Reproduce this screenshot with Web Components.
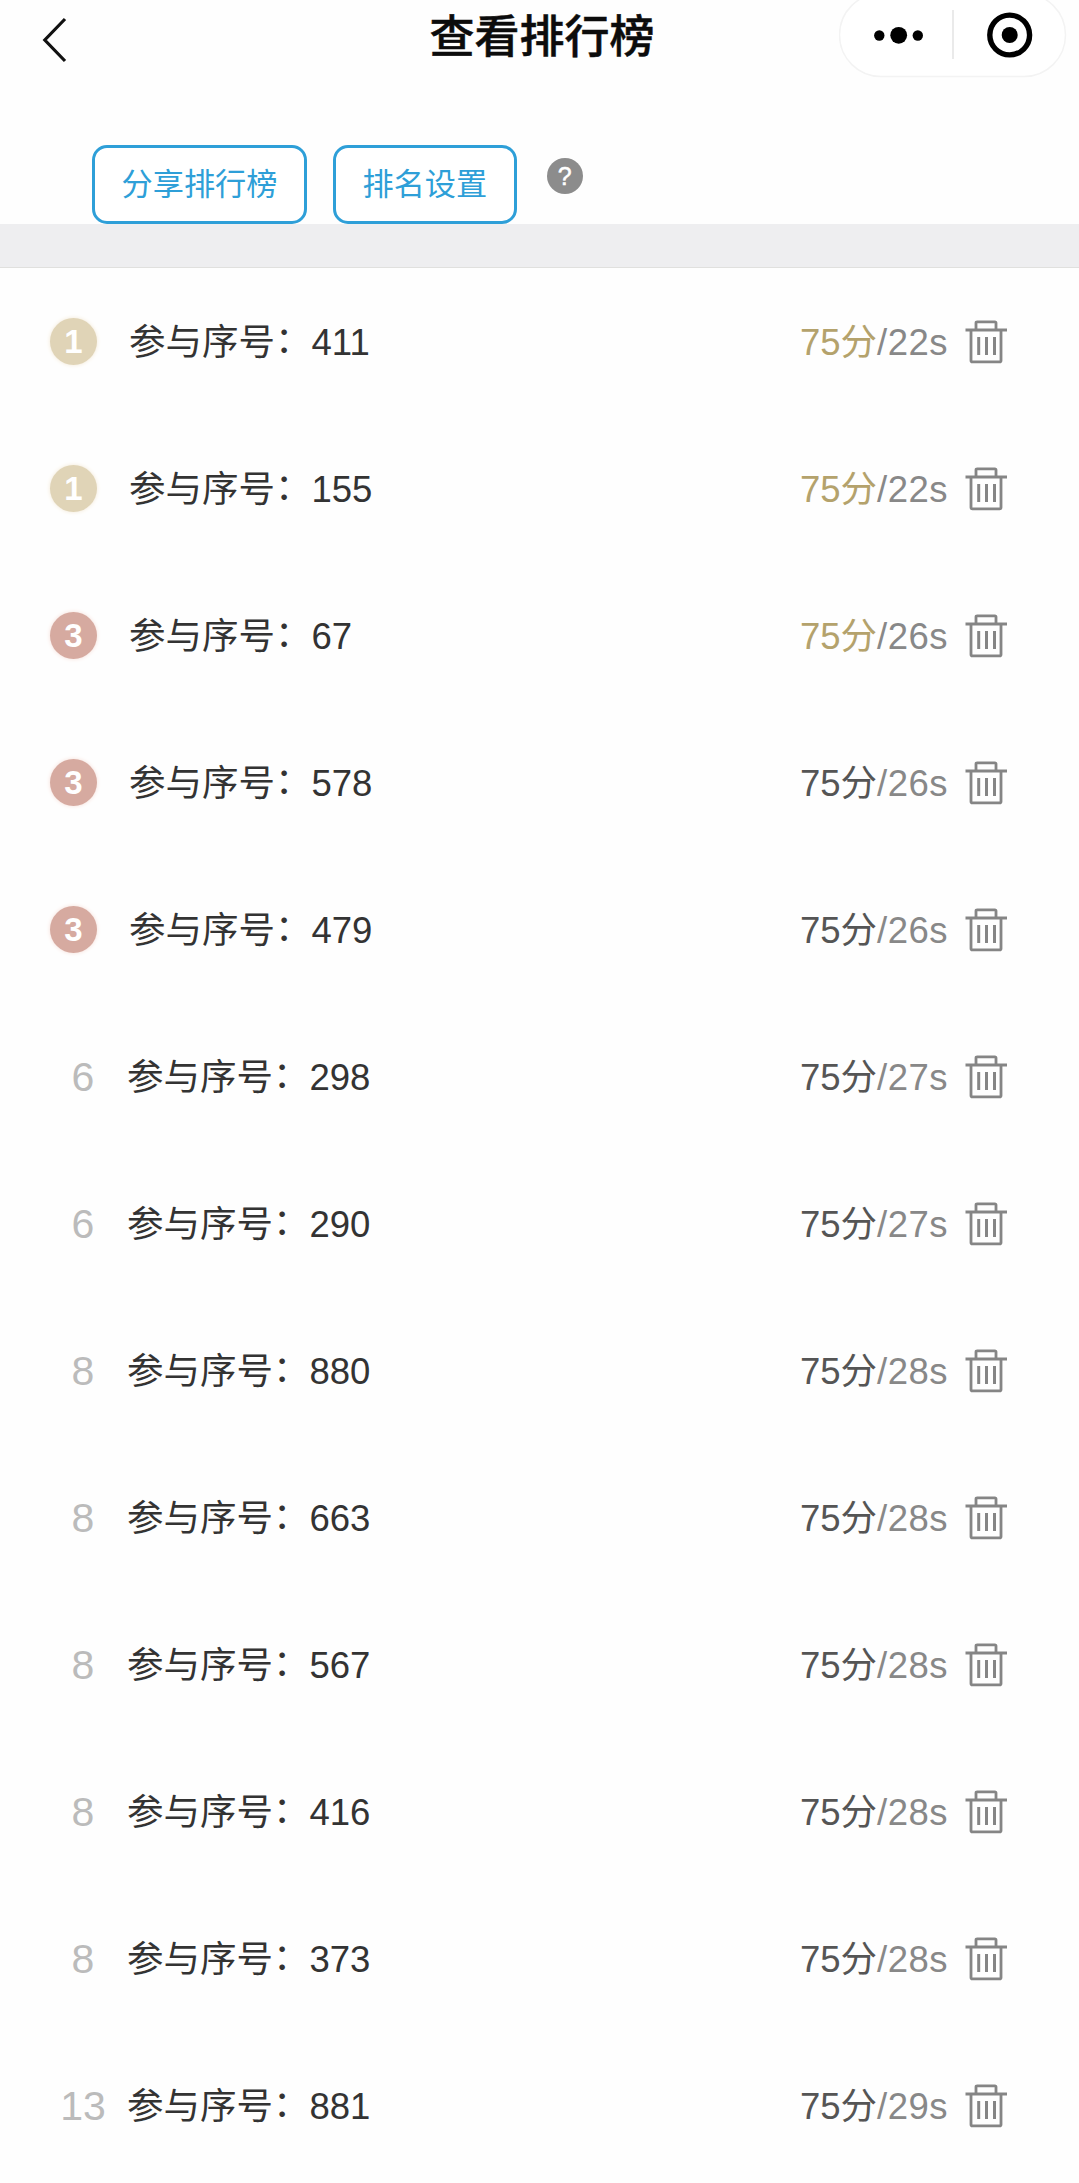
<!DOCTYPE html>
<html lang="zh-CN">
<head>
<meta charset="UTF-8">
<title>查看排行榜</title>
<style>
    body {
        margin: 0;
        background: #fefefe;
        font-family: "Liberation Sans", "Noto Sans CJK SC", sans-serif;
        overflow: hidden;
    }
</style>
</head>
<body>
<ranking-page></ranking-page>

<script>
class NavBar extends HTMLElement {
    constructor() {
        super();
        this.attachShadow({ mode: 'open' });
    }

    connectedCallback() {
        this.shadowRoot.innerHTML = `
            <style>
                :host {
                    display: grid;
                    grid-template-columns: 240px 1fr 240px;
                    height: 78px;
                }
                .back {
                    display: block;
                    margin: 15px 0 0 40px;
                }
                .title {
                    margin: 0;
                    padding-left: 5px;
                    text-align: center;
                    font-size: 45px;
                    line-height: 76px;
                    font-weight: 500;
                    color: #0c0c0c;
                    -webkit-text-stroke: 0.5px #0c0c0c;
                }
                .capsule {
                    display: block;
                }
            </style>
            <svg class="back" width="30" height="50" viewBox="0 0 30 50" fill="none" stroke="#111" stroke-width="3.2">
                <path d="M25 4L4.8 25L25 46"/>
            </svg>
            <h1 class="title"><slot></slot></h1>
            <svg class="capsule" width="240" height="78" viewBox="0 0 240 78">
                <rect x="0.5" y="-6.5" width="226" height="83" rx="41.5" fill="#fff" stroke="#f3f3f3" stroke-width="1.5"/>
                <g fill="#000">
                    <circle cx="40.3" cy="35.5" r="5.2"/>
                    <circle cx="59.7" cy="35.3" r="8.4"/>
                    <circle cx="78.8" cy="35.5" r="5.2"/>
                    <circle cx="170.7" cy="35" r="8"/>
                </g>
                <path d="M114 10V59" stroke="#d5d5d5"/>
                <circle cx="170.7" cy="35" r="19.9" fill="none" stroke="#000" stroke-width="5.4"/>
            </svg>
        `;
    }
}

class OutlineButton extends HTMLElement {
    constructor() {
        super();
        this.attachShadow({ mode: 'open' });
    }

    connectedCallback() {
        this.shadowRoot.innerHTML = `
            <style>
                :host {
                    display: block;
                }
                button {
                    display: block;
                    height: 79px;
                    padding: 0 26.5px;
                    border: 3px solid #2e9fd8;
                    border-radius: 15px;
                    background: #fff;
                    color: #2e9fd8;
                    font: inherit;
                    font-size: 31.2px;
                    line-height: 74px;
                    white-space: nowrap;
                }
            </style>
            <button><slot></slot></button>
        `;
    }
}

class HelpIcon extends HTMLElement {
    constructor() {
        super();
        this.attachShadow({ mode: 'open' });
    }

    connectedCallback() {
        this.shadowRoot.innerHTML = `
            <style>
                :host {
                    display: block;
                    width: 36px;
                    height: 36px;
                    border-radius: 50%;
                    background: #8c8c8c;
                    color: #fff;
                    font-size: 25px;
                    line-height: 37px;
                    text-align: center;
                    -webkit-text-stroke: 0.5px #fff;
                }
            </style>
            ?
        `;
    }
}

class RankRow extends HTMLElement {
    constructor() {
        super();
        this.attachShadow({ mode: 'open' });
    }

    connectedCallback() {
        const rank = this.getAttribute('rank');
        const medal = Number(rank) <= 3;

        this.shadowRoot.innerHTML = `
            <style>
                :host {
                    display: flex;
                    align-items: center;
                    height: 147px;
                    padding-right: 71px;
                    font-size: 36.5px;
                    line-height: 54px;
                    color: #333;
                    white-space: nowrap;
                }
                .rank {
                    width: 78px;
                    padding: 1px 0 0 44px;
                    margin-right: 5px;
                    text-align: center;
                    font-size: 41px;
                    color: #bbb;
                }
                .medal {
                    width: 47px;
                    height: 47px;
                    margin: 0 32px 0 50px;
                    border-radius: 50%;
                    background: #e0d4b7;
                    box-shadow: 0 0 4px #f4e9d5;
                    color: #fff;
                    font-size: 33px;
                    font-weight: bold;
                    line-height: 48px;
                    text-align: center;
                }
                .medal.bronze {
                    background: #d6aaa0;
                    box-shadow: 0 0 4px #f7dfd8;
                }
                .name {
                    flex: 1;
                }
                .name, .score, .time {
                    padding-top: 2px;
                }
                .colon {
                    display: inline-block;
                    transform: translateY(-2px);
                }
                .score {
                    color: #555;
                }
                .score.top {
                    color: #b4a26c;
                }
                .time {
                    color: #888;
                    letter-spacing: 0.5px;
                }
                .trash {
                    margin-left: 16px;
                }
            </style>
            <div class="${medal ? 'medal' : 'rank'}${rank === '3' ? ' bronze' : ''}">${rank}</div>
            <div class="name">参与序号<span class="colon">：</span><slot></slot></div>
            <div class="score${this.hasAttribute('top') ? ' top' : ''}">75分</div>
            <div class="time">/${this.getAttribute('time')}</div>
            <svg class="trash" width="44" height="44" viewBox="0 0 44 44" fill="none" stroke="#858585" stroke-width="2.8">
                <path d="M1.5 10H43M12 10V3Q12 1.8 13.2 1.8H30.8Q32 1.8 32 3V10"/>
                <path d="M7 10V40.4Q7 41.8 8.4 41.8H35.6Q37 41.8 37 40.4V10"/>
                <path d="M14.7 17V35M22.5 17V35M30.5 17V35" stroke-width="3"/>
            </svg>
        `;
    }
}

class RankingPage extends HTMLElement {
    constructor() {
        super();
        this.attachShadow({ mode: 'open' });
    }

    connectedCallback() {
        // rank, entry number, time
        const rows = [
            [1, 411, '22s'],
            [1, 155, '22s'],
            [3, 67, '26s'],
            [3, 578, '26s'],
            [3, 479, '26s'],
            [6, 298, '27s'],
            [6, 290, '27s'],
            [8, 880, '28s'],
            [8, 663, '28s'],
            [8, 567, '28s'],
            [8, 416, '28s'],
            [8, 373, '28s'],
            [13, 881, '29s']
        ];

        this.shadowRoot.innerHTML = `
            <style>
                :host {
                    display: block;
                    width: 1079px;
                    height: 2183px;
                    overflow: hidden;
                }
                .actions {
                    display: flex;
                    gap: 26px;
                    height: 79px;
                    padding: 67px 0 0 92px;
                }
                help-icon {
                    margin: 13px 0 0 4px;
                }
                .band {
                    height: 43px;
                    background: #eeeef0;
                    border-bottom: 1px solid #e0e0de;
                }
            </style>
            <nav-bar>查看排行榜</nav-bar>
            <div class="actions">
                <outline-button>分享排行榜</outline-button>
                <outline-button>排名设置</outline-button>
                <help-icon></help-icon>
            </div>
            <div class="band"></div>
            ${rows.map(([rank, no, time], i) => `
                <rank-row rank="${rank}" time="${time}"${i < 3 ? ' top' : ''}>${no}</rank-row>
            `).join('')}
        `;
    }
}

customElements.define('nav-bar', NavBar);
customElements.define('outline-button', OutlineButton);
customElements.define('help-icon', HelpIcon);
customElements.define('rank-row', RankRow);
customElements.define('ranking-page', RankingPage);
</script>
</body>
</html>
